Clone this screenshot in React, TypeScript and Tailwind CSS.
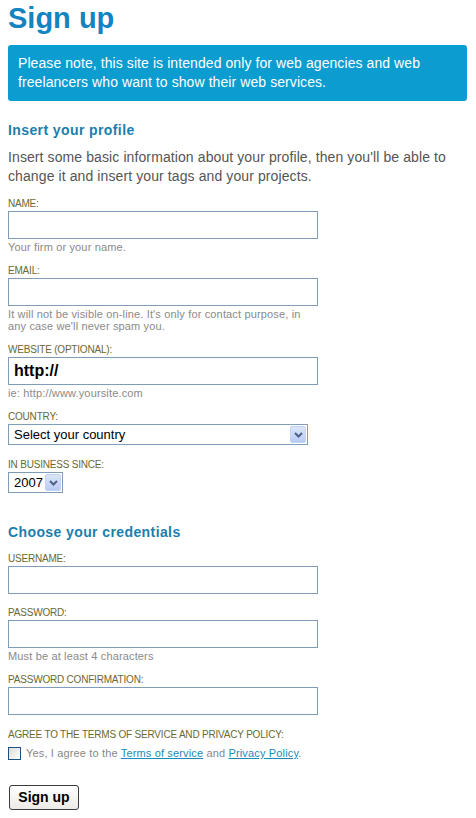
import React from "react";

function Label({ children }: { children: React.ReactNode }) {
  return (
    <div className="text-[10px] leading-[12px] text-[#6b6830] tracking-[-0.2px] mb-[1px]">
      {children}
    </div>
  );
}

function Hint({ children }: { children: React.ReactNode }) {
  return (
    <div className="text-[11px] leading-[12px] text-[#8a8a8a] tracking-[0.15px] mt-[2px] w-[300px]">{children}</div>
  );
}

function TextBox({ value }: { value?: string }) {
  return (
    <div className="w-[310px] h-[28px] border border-[#7f9db9] bg-white flex items-center px-[5px]">
      {value && <span className="text-[16px] font-bold text-black">{value}</span>}
    </div>
  );
}

function Arrow() {
  return (
    <div className="w-[16px] h-[17px] rounded-[2px] bg-gradient-to-b from-[#dbe6fb] to-[#b7cbf3] border border-[#c3d3f3] flex items-center justify-center">
      <svg width="9" height="6" viewBox="0 0 9 6">
        <path d="M1 1l3.5 3.5L8 1" stroke="#4d6185" strokeWidth="2" fill="none" />
      </svg>
    </div>
  );
}

function Select({ value, width }: { value: string; width: string }) {
  return (
    <div className={`${width} h-[21px] border border-[#7f9db9] bg-white flex items-center justify-between pl-[5px] pr-[1px]`}>
      <span className="text-[13px] text-black">{value}</span>
      <Arrow />
    </div>
  );
}

function Field({
  label,
  children,
  hint,
  className = "mb-[14px]",
}: {
  label: string;
  children: React.ReactNode;
  hint?: React.ReactNode;
  className?: string;
}) {
  return (
    <div className={className}>
      <Label>{label}</Label>
      {children}
      {hint && <Hint>{hint}</Hint>}
    </div>
  );
}

export default function App() {
  return (
    <div className="w-[476px] min-h-[818px] bg-white px-[8px] font-['Liberation_Sans',Arial,sans-serif]">
      <h1 className="text-[29px] font-bold text-[#1384c0] leading-[36px]">Sign up</h1>

      <div className="mt-[9px] w-[459px] h-[56px] bg-[#0b9cd0] rounded-[3px] px-[10px] pt-[9px] text-[14px] leading-[19px] tracking-[0.08px] text-white">
        Please note, this site is intended only for web agencies and web freelancers who want to show their web services.
      </div>

      <h2 className="mt-[21px] text-[14px] font-bold tracking-[0.4px] text-[#1b7eae] leading-[16px]">Insert your profile</h2>
      <p className="mt-[10px] text-[14px] leading-[19px] tracking-[0.1px] text-[#555] w-[460px]">
        Insert some basic information about your profile, then you'll be able to change it and insert your tags and your projects.
      </p>

      <div className="mt-[12px]">
        <Field label="NAME:" hint="Your firm or your name." className="mb-[12px]">
          <TextBox />
        </Field>
        <Field
          label="EMAIL:"
          hint="It will not be visible on-line. It's only for contact purpose, in any case we'll never spam you."
          className="mb-[12px]"
        >
          <TextBox />
        </Field>
        <Field label="WEBSITE (OPTIONAL):" hint="ie: http://www.yoursite.com" className="mb-[12px]">
          <TextBox value="http://" />
        </Field>
        <Field label="COUNTRY:">
          <Select value="Select your country" width="w-[300px]" />
        </Field>
        <Field label="IN BUSINESS SINCE:">
          <Select value="2007" width="w-[55px]" />
        </Field>
      </div>

      <h2 className="mt-[31px] text-[14px] font-bold tracking-[0.4px] text-[#1b7eae] leading-[16px] mb-[13px]">
        Choose your credentials
      </h2>

      <Field label="USERNAME:" className="mb-[13px]">
        <TextBox />
      </Field>
      <Field label="PASSWORD:" hint="Must be at least 4 characters" className="mb-[12px]">
        <TextBox />
      </Field>
      <Field label="PASSWORD CONFIRMATION:">
        <TextBox />
      </Field>

      <div className="mt-[5px]">
        <Label>AGREE TO THE TERMS OF SERVICE AND PRIVACY POLICY:</Label>
        <div className="flex items-center gap-[5px] mt-[4px] text-[11px] tracking-[0.15px] text-[#888]">
          <div className="w-[13px] h-[13px] border border-[#1c5180] bg-gradient-to-br from-[#dcdcd7] to-white" />
          <span>
            Yes, I agree to the{" "}
            <a className="text-[#1b8ab8] underline" href="#">Terms of service</a> and{" "}
            <a className="text-[#1b8ab8] underline" href="#">Privacy Policy</a>.
          </span>
        </div>
      </div>

      <button className="mt-[23px] ml-[1px] w-[70px] h-[25px] border border-[#3c3c3c] rounded-[3px] bg-gradient-to-b from-white to-[#ecebe6] text-[14px] font-bold text-black">
        Sign up
      </button>
    </div>
  );
}
